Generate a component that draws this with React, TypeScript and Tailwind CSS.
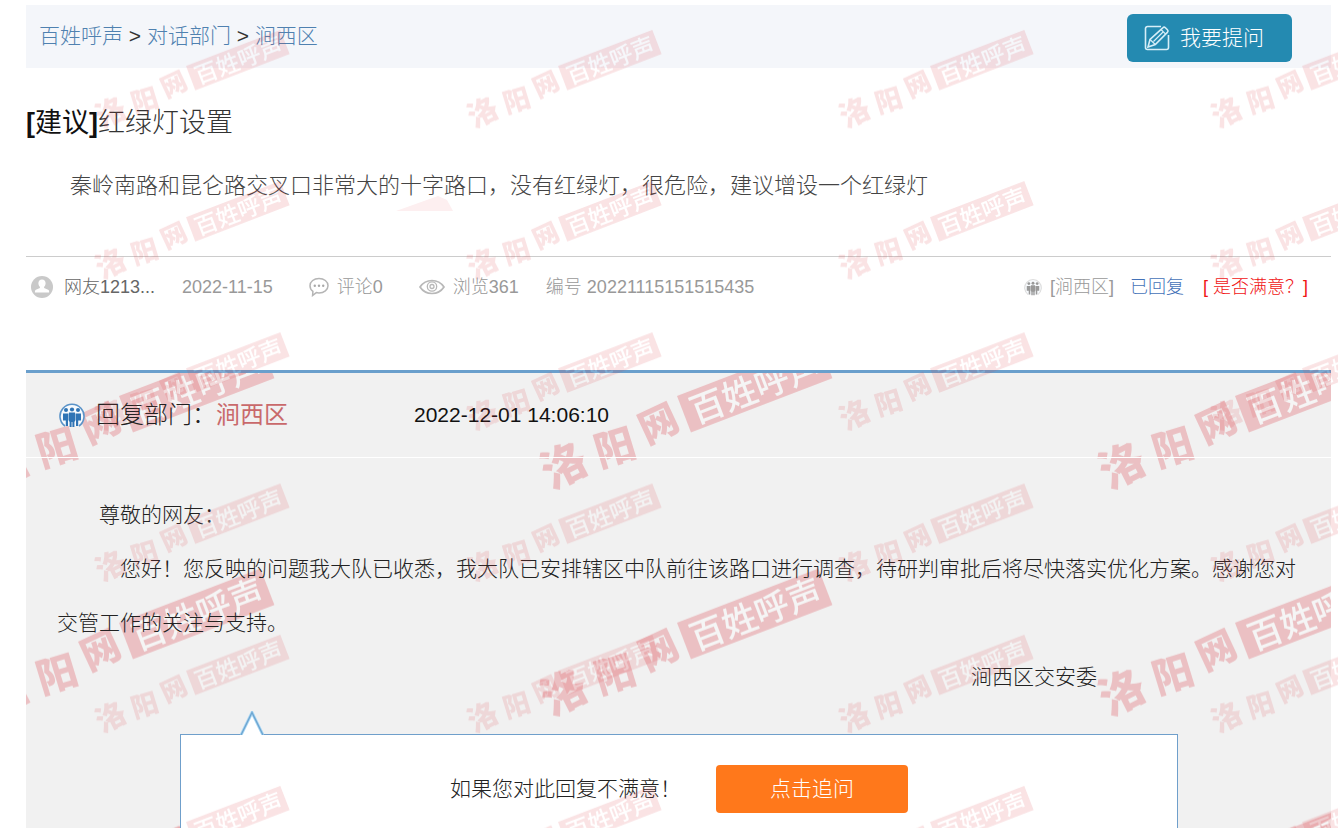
import React from "react";

type WatermarkProps = {
    id: string
    x: number
    y: number
    scale: number
    opacity: number
}

// repeating site logo, one tile is 372 x 151.2 at scale 1
const Watermark = ({ id, x, y, scale, opacity }: WatermarkProps) => (
    <svg aria-hidden="true" className="pointer-events-none absolute inset-0 h-full w-full">
        <defs>
            <pattern
                id={id}
                width="372"
                height="151.2"
                patternUnits="userSpaceOnUse"
                patternTransform={`translate(${x} ${y}) scale(${scale})`}
            >
                <g
                    transform="translate(96 52) rotate(-21)"
                    opacity={opacity}
                    fontFamily='"Noto Sans CJK SC", sans-serif'
                    fontWeight="900"
                    textAnchor="middle"
                >
                    <g fill="#d8323c">
                        <text x="-87" y="27" fontSize="30" transform="rotate(-6 -87 16)">洛</text>
                        <text x="-51" y="27" fontSize="27" transform="rotate(4 -51 17)">阳</text>
                        <text x="-18" y="22" fontSize="26" transform="rotate(-4 -18 13)">网</text>
                    </g>
                    <rect width="101" height="26" fill="#d8323c" />
                    <text x="51" y="22" fill="#fff" fontSize="23" fontWeight="500">百姓呼声</text>
                </g>
            </pattern>
        </defs>
        <rect width="100%" height="100%" fill={`url(#${id})`} />
    </svg>
)

const PenIcon = () => (
    <svg viewBox="0 0 26 26" className="h-[26px] w-[26px]" fill="none" stroke="#d6eef8" strokeWidth="1.6">
        <path d="M17 1.5H3.5a2 2 0 0 0-2 2v19a2 2 0 0 0 2 2h19a2 2 0 0 0 2-2V10" />
        <path d="M4 22l2-7.500L18.800 2.800c.8-.8 1.800-.8 2.600 0l2 2c.8.8.8 1.800 0 2.600L11.300 19.500z" />
        <path d="M6 14.500l5.300 5M17 4.500l4.700 4.600M9.500 16.500L19.300 6.800" strokeWidth="1.200" />
    </svg>
)

const UserIcon = () => (
    <svg viewBox="0 0 22 22" className="h-[22px] w-[22px]">
        <circle cx="11" cy="11" r="11" fill="#c9c9c9" />
        <path
            d="M11 3.500c2.200 0 3.600 1.600 3.600 3.700 0 1.500-.6 2.800-1.500 3.600v1.300l4 1.600c.8.4 1 .9 1 1.700v1.200H3.900v-1.200c0-.8.3-1.300 1-1.700l4-1.600v-1.300c-.9-.8-1.500-2.100-1.500-3.600 0-2.100 1.400-3.700 3.600-3.700z"
            fill="#fff"
        />
    </svg>
)

const CommentIcon = () => (
    <svg viewBox="0 0 20 20" className="h-5 w-5">
        <path
            d="M10 1.500c5 0 9 3 9 7.200s-4 7.200-9 7.200c-1 0-1.900-.1-2.700-.3L3.600 18.500l.3-4.200C2.100 13 1 11 1 8.700 1 4.500 5 1.500 10 1.500z"
            fill="#fff"
            stroke="#b5b5b5"
            strokeWidth="1.500"
        />
        <circle cx="5.800" cy="8.800" r="1.200" fill="#a8a8a8" />
        <circle cx="10" cy="8.800" r="1.200" fill="#a8a8a8" />
        <circle cx="14.200" cy="8.800" r="1.200" fill="#a8a8a8" />
    </svg>
)

const EyeIcon = () => (
    <svg viewBox="0 0 26 16" className="h-4 w-[26px]" fill="none" stroke="#b8b8b8">
        <path d="M1 8c3-4.500 7.300-6.500 12-6.500S22 3.500 25 8c-3 4.500-7.300 6.500-12 6.500S4 12.500 1 8z" strokeWidth="1.700" />
        <circle cx="13" cy="7.500" r="4.700" strokeWidth="1.300" />
        <circle cx="13" cy="7.500" r="2" strokeWidth="1.300" />
    </svg>
)

const GroupIcon = ({ color, ring, className }: { color: string; ring: string; className: string }) => (
    <svg viewBox="0 0 26 24" className={className}>
        <path d="M6 23A12 12 0 1 1 20 23" fill="#f7fafd" stroke={ring} strokeWidth="1.600" />
        <g fill={color}>
            <circle cx="7" cy="7" r="2" />
            <circle cx="13" cy="6.500" r="2.100" />
            <circle cx="19" cy="7" r="2" />
            <path d="M4 10.500h5.500v7H9v5.500H6.800v-5.500H4zM16.500 10.500H22v7h-2.800v5.500H17v-5.500h-.5z" />
            <path d="M10 9.500h6v9h-.6V24h-2V19h-.8v5h-2v-5.500H10z" />
        </g>
    </svg>
)

const App = () => {
    return (
        <div className='relative h-screen overflow-hidden bg-white pt-[5px] pr-[7px] pl-[26px] font-["Liberation_Sans","Noto_Sans_CJK_SC",sans-serif] font-light text-[#222]'>
            <header className="flex h-[63px] items-start justify-between bg-[#f4f6fa] pr-[39px] pl-[13px]">
                <nav className="text-[21px] leading-[62px] text-[#333]">
                    <a href="#home" className="text-[#4f81b0]">百姓呼声</a>
                    {" > "}
                    <a href="#departments" className="text-[#4f81b0]">对话部门</a>
                    {" > "}
                    <a href="#jianxi" className="text-[#4f81b0]">涧西区</a>
                </nav>
                <button
                    type="button"
                    className="relative z-10 mt-[9px] flex h-12 w-[165px] items-center gap-[10px] rounded-md bg-[#248ab1] pl-[17px] text-[21px] text-white"
                >
                    <PenIcon />
                    我要提问
                </button>
            </header>

            <main>
                <section className="relative">
                    <svg aria-hidden="true" viewBox="0 0 58 16" className="absolute top-[96px] left-[370px] h-4 w-[58px]">
                        <path d="M0 15L42 0l9 4 6 11z" fill="#fdeff0" />
                    </svg>
                    <h1 className="mt-8 text-[27px] leading-[46px] text-[#333]">
                        <span className="font-bold text-[#111]">[</span>
                        <span className="font-normal text-[#111]">建议</span>
                        <span className="font-bold text-[#111]">]</span>
                        红绿灯设置
                    </h1>
                    <p className="relative mt-[22px] indent-[2em] text-[22px] leading-9 text-[#444]">
                        秦岭南路和昆仑路交叉口非常大的十字路口，没有红绿灯，很危险，建议增设一个红绿灯
                    </p>
                    <div className="mt-[52px] flex h-[61px] items-center justify-between border-t border-[#ccc] pr-[23px] pl-[5px] text-[18px] text-[#999]">
                        <div className="flex items-center">
                            <UserIcon />
                            <span className="ml-[11px] text-[#666]">网友1213...</span>
                            <span className="ml-[27px]">2022-11-15</span>
                            <span className="ml-[36px] flex items-center gap-2">
                                <CommentIcon />
                                评论0
                            </span>
                            <span className="ml-[36px] flex items-center gap-2">
                                <EyeIcon />
                                浏览361
                            </span>
                            <span className="ml-[27px]">编号 20221115151515435</span>
                        </div>
                        <div className="flex items-center">
                            <GroupIcon color="#999" ring="#ddd" className="h-[18px] w-[18px]" />
                            <span className="ml-2">[涧西区]</span>
                            <span className="ml-4 text-[#4472b8]">已回复</span>
                            <a href="#rate" className="ml-[19px] text-[#f01414]">[ 是否满意？]</a>
                        </div>
                    </div>
                </section>

                <section className="relative mt-[53px] border-t-[3px] border-[#6a9fcc] bg-[#f1f1f1] pb-20">
                    <Watermark id="mark-reply" x={-51} y={-55} scale={1.5} opacity={0.26} />
                    <div className="relative flex h-[85px] items-center border-b border-white pl-[33px]">
                        <GroupIcon color="#2f74b5" ring="#5b93c8" className="h-6 w-[26px]" />
                        <h2 className="ml-[11px] text-[24px] text-[#222]">
                            回复部门：<span className="font-normal text-[#c9696b]">涧西区</span>
                        </h2>
                        <time className="ml-[126px] text-[21px] text-[#111]">2022-12-01 14:06:10</time>
                    </div>
                    <div className="relative pt-[30px] pr-[30px] pl-[31px] text-[21px] leading-[54px] text-[#222]">
                        <p className="indent-[2em]">尊敬的网友：</p>
                        <p className="indent-[3em]">
                            您好！您反映的问题我大队已收悉，我大队已安排辖区中队前往该路口进行调查，待研判审批后将尽快落实优化方案。感谢您对交管工作的关注与支持。
                        </p>
                        <p className="pr-[204px] text-right">涧西区交安委</p>
                    </div>
                    <div className="relative mr-[153px] ml-[154px] mt-[30px] flex items-start justify-center gap-[35px] border border-[#6f9fcb] bg-white pt-[30px] pb-10 text-[21px]">
                        <svg aria-hidden="true" viewBox="0 0 24 24" className="absolute -top-6 left-[59px] h-6 w-6">
                            <path d="M1 24L12 1.500 23 24z" fill="#fff" />
                            <path d="M1 24L12 1.500 23 24" fill="none" stroke="#a9d6f3" strokeWidth="3" />
                            <path d="M1 24L12 1.500 23 24" fill="none" stroke="#6da5d0" strokeWidth="1.300" />
                        </svg>
                        <p className="leading-[48px]">如果您对此回复不满意！</p>
                        <button type="button" className="h-12 w-48 rounded bg-[#ff781b] text-white">
                            点击追问
                        </button>
                    </div>
                </section>
            </main>

            <Watermark id="mark-page" x={90} y={14} scale={1} opacity={0.14} />
        </div>
    );
}


export default App;
